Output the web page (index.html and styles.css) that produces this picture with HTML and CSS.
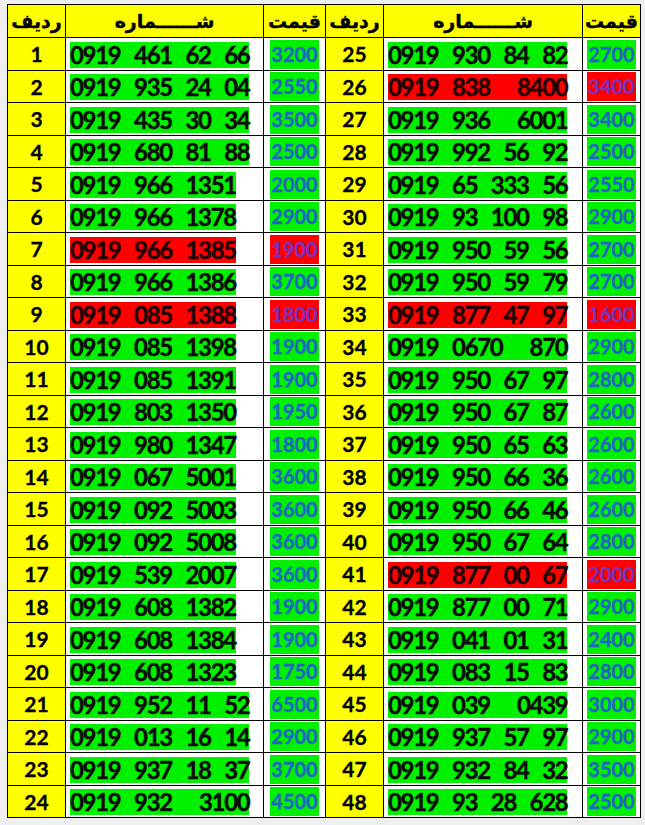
FILE: index.html
```html
<!DOCTYPE html>
<html lang="fa">
<head>
<meta charset="utf-8">
<title>لیست شماره‌ها</title>
<link rel="stylesheet" href="styles.css">
</head>
<body>
<div class="sheet">
<table class="grid">
<colgroup>
<col class="c-idx"><col class="c-num"><col class="c-price"><col class="c-idx2"><col class="c-num2"><col class="c-price2">
</colgroup>
<thead>
<tr class="head">
<th>ردیف</th><th>شــــــماره</th><th>قیمت</th>
<th>ردیف</th><th>شــــــماره</th><th>قیمت</th>
</tr>
</thead>
<tbody>
<tr><td class="idx">1</td><td class="num"><span class="hl">0919 461 62 66</span></td><td class="price"><span class="pv">3200</span></td><td class="idx">25</td><td class="num"><span class="hl">0919 930 84 82</span></td><td class="price"><span class="pv">2700</span></td></tr>
<tr><td class="idx">2</td><td class="num"><span class="hl">0919 935 24 04</span></td><td class="price"><span class="pv">2550</span></td><td class="idx">26</td><td class="num"><span class="hl red">0919 838  8400</span></td><td class="price"><span class="pv red">3400</span></td></tr>
<tr><td class="idx">3</td><td class="num"><span class="hl">0919 435 30 34</span></td><td class="price"><span class="pv">3500</span></td><td class="idx">27</td><td class="num"><span class="hl">0919 936  6001</span></td><td class="price"><span class="pv">3400</span></td></tr>
<tr><td class="idx">4</td><td class="num"><span class="hl">0919 680 81 88</span></td><td class="price"><span class="pv">2500</span></td><td class="idx">28</td><td class="num"><span class="hl">0919 992 56 92</span></td><td class="price"><span class="pv">2500</span></td></tr>
<tr><td class="idx">5</td><td class="num"><span class="hl">0919 966 1351</span></td><td class="price"><span class="pv">2000</span></td><td class="idx">29</td><td class="num"><span class="hl">0919 65 333 56</span></td><td class="price"><span class="pv">2550</span></td></tr>
<tr><td class="idx">6</td><td class="num"><span class="hl">0919 966 1378</span></td><td class="price"><span class="pv">2900</span></td><td class="idx">30</td><td class="num"><span class="hl">0919 93 100 98</span></td><td class="price"><span class="pv">2900</span></td></tr>
<tr><td class="idx">7</td><td class="num"><span class="hl red">0919 966 1385</span></td><td class="price"><span class="pv red">1900</span></td><td class="idx">31</td><td class="num"><span class="hl">0919 950 59 56</span></td><td class="price"><span class="pv">2700</span></td></tr>
<tr><td class="idx">8</td><td class="num"><span class="hl">0919 966 1386</span></td><td class="price"><span class="pv">3700</span></td><td class="idx">32</td><td class="num"><span class="hl">0919 950 59 79</span></td><td class="price"><span class="pv">2700</span></td></tr>
<tr><td class="idx">9</td><td class="num"><span class="hl red">0919 085 1388</span></td><td class="price"><span class="pv red">1800</span></td><td class="idx">33</td><td class="num"><span class="hl red">0919 877 47 97</span></td><td class="price"><span class="pv red">1600</span></td></tr>
<tr><td class="idx">10</td><td class="num"><span class="hl">0919 085 1398</span></td><td class="price"><span class="pv">1900</span></td><td class="idx">34</td><td class="num"><span class="hl">0919 0670  870</span></td><td class="price"><span class="pv">2900</span></td></tr>
<tr><td class="idx">11</td><td class="num"><span class="hl">0919 085 1391</span></td><td class="price"><span class="pv">1900</span></td><td class="idx">35</td><td class="num"><span class="hl">0919 950 67 97</span></td><td class="price"><span class="pv">2800</span></td></tr>
<tr><td class="idx">12</td><td class="num"><span class="hl">0919 803 1350</span></td><td class="price"><span class="pv">1950</span></td><td class="idx">36</td><td class="num"><span class="hl">0919 950 67 87</span></td><td class="price"><span class="pv">2600</span></td></tr>
<tr><td class="idx">13</td><td class="num"><span class="hl">0919 980 1347</span></td><td class="price"><span class="pv">1800</span></td><td class="idx">37</td><td class="num"><span class="hl">0919 950 65 63</span></td><td class="price"><span class="pv">2600</span></td></tr>
<tr><td class="idx">14</td><td class="num"><span class="hl">0919 067 5001</span></td><td class="price"><span class="pv">3600</span></td><td class="idx">38</td><td class="num"><span class="hl">0919 950 66 36</span></td><td class="price"><span class="pv">2600</span></td></tr>
<tr><td class="idx">15</td><td class="num"><span class="hl">0919 092 5003</span></td><td class="price"><span class="pv">3600</span></td><td class="idx">39</td><td class="num"><span class="hl">0919 950 66 46</span></td><td class="price"><span class="pv">2600</span></td></tr>
<tr><td class="idx">16</td><td class="num"><span class="hl">0919 092 5008</span></td><td class="price"><span class="pv">3600</span></td><td class="idx">40</td><td class="num"><span class="hl">0919 950 67 64</span></td><td class="price"><span class="pv">2800</span></td></tr>
<tr><td class="idx">17</td><td class="num"><span class="hl">0919 539 2007</span></td><td class="price"><span class="pv">3600</span></td><td class="idx">41</td><td class="num"><span class="hl red">0919 877 00 67</span></td><td class="price"><span class="pv red">2000</span></td></tr>
<tr><td class="idx">18</td><td class="num"><span class="hl">0919 608 1382</span></td><td class="price"><span class="pv">1900</span></td><td class="idx">42</td><td class="num"><span class="hl">0919 877 00 71</span></td><td class="price"><span class="pv">2900</span></td></tr>
<tr><td class="idx">19</td><td class="num"><span class="hl">0919 608 1384</span></td><td class="price"><span class="pv">1900</span></td><td class="idx">43</td><td class="num"><span class="hl">0919 041 01 31</span></td><td class="price"><span class="pv">2400</span></td></tr>
<tr><td class="idx">20</td><td class="num"><span class="hl">0919 608 1323</span></td><td class="price"><span class="pv">1750</span></td><td class="idx">44</td><td class="num"><span class="hl">0919 083 15 83</span></td><td class="price"><span class="pv">2800</span></td></tr>
<tr><td class="idx">21</td><td class="num"><span class="hl">0919 952 11 52</span></td><td class="price"><span class="pv">6500</span></td><td class="idx">45</td><td class="num"><span class="hl">0919 039  0439</span></td><td class="price"><span class="pv">3000</span></td></tr>
<tr><td class="idx">22</td><td class="num"><span class="hl">0919 013 16 14</span></td><td class="price"><span class="pv">2900</span></td><td class="idx">46</td><td class="num"><span class="hl">0919 937 57 97</span></td><td class="price"><span class="pv">2900</span></td></tr>
<tr><td class="idx">23</td><td class="num"><span class="hl">0919 937 18 37</span></td><td class="price"><span class="pv">3700</span></td><td class="idx">47</td><td class="num"><span class="hl">0919 932 84 32</span></td><td class="price"><span class="pv">3500</span></td></tr>
<tr><td class="idx">24</td><td class="num"><span class="hl">0919 932  3100</span></td><td class="price"><span class="pv">4500</span></td><td class="idx">48</td><td class="num"><span class="hl">0919 93 28 628</span></td><td class="price"><span class="pv">2500</span></td></tr>
</tbody>
</table>
</div>
</body>
</html>
```

FILE: styles.css
```css
html, body {
  margin: 0;
  padding: 0;
}

body {
  background: #efefef;
  width: 645px;
  height: 825px;
  overflow: hidden;
}

.sheet {
  padding: 4px 0 0 7px;
}

.grid {
  border-collapse: collapse;
  table-layout: fixed;
  width: 633px;
  background: #ffffff;
}

.c-idx { width: 58px; }
.c-num { width: 198px; }
.c-price { width: 62px; }
.c-idx2 { width: 58px; }
.c-num2 { width: 199px; }
.c-price2 { width: 58px; }

.grid th,
.grid td {
  border: 1px solid #000000;
  padding: 0;
  vertical-align: middle;
}

.head th {
  height: 32px;
  background: #ffff00;
  font-family: "DejaVu Sans", sans-serif;
  font-weight: 700;
  font-size: 19px;
  color: #000000;
  text-align: center;
  direction: rtl;
  -webkit-text-stroke: 0.4px #000000;
}

.grid tbody tr {
  height: 32.5px;
}

.idx {
  background: #ffff00;
  text-align: center;
  font-family: Lato, "Liberation Sans", sans-serif;
  font-weight: 700;
  font-size: 21px;
  color: #000000;
  -webkit-text-stroke: 0.3px #000000;
}

.num {
  padding-left: 4px !important;
  padding-top: 2px !important;
  line-height: 0;
}

.hl {
  display: inline-block;
  height: 26px;
  line-height: 25px;
  background: #00f000;
  color: #0a0a0a;
  font-family: Lato, "Liberation Sans", sans-serif;
  font-weight: 700;
  font-size: 24px;
  letter-spacing: -1.3px;
  word-spacing: 9px;
  white-space: pre;
  -webkit-text-stroke: 0.4px #0a0a0a;
}

.hl.red {
  background: #ff0000;
  color: #1e0000;
  -webkit-text-stroke-color: #1e0000;
}

.price {
  text-align: center;
  line-height: 0;
  padding-top: 1px !important;
}

.pv {
  display: inline-block;
  min-width: 48px;
  height: 29px;
  line-height: 29px;
  padding: 0 1px;
  box-sizing: border-box;
  background: #00f000;
  color: #1f66c2;
  font-family: Lato, "Liberation Sans", sans-serif;
  font-weight: 700;
  font-size: 20px;
  text-align: center;
  -webkit-text-stroke: 0.3px #1f66c2;
}

.pv.red {
  background: #ff0000;
  color: #7a30b8;
  -webkit-text-stroke-color: #7a30b8;
}
```
